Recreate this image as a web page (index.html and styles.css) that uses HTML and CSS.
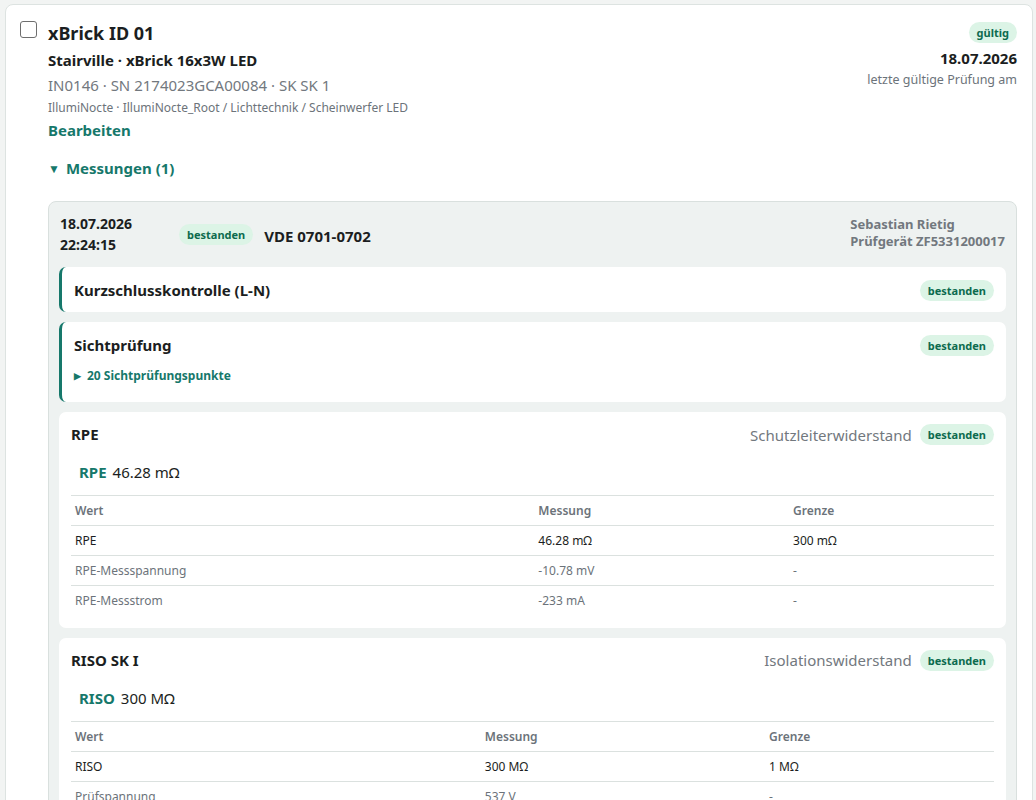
FILE: index.html
```html
<!DOCTYPE html>
<html lang="de">
<head>
<meta charset="utf-8">
<title>xBrick ID 01</title>
<link rel="stylesheet" href="styles.css">
</head>
<body>
<div class="card">
  <div class="head">
    <span class="checkbox"></span>
    <div class="info">
      <div class="title">xBrick ID 01</div>
      <div class="subtitle">Stairville · xBrick 16x3W LED</div>
      <div class="ids">IN0146 · SN 2174023GCA00084 · SK SK 1</div>
      <div class="path">IllumiNocte · IllumiNocte_Root / Lichttechnik / Scheinwerfer LED</div>
      <div class="edit">Bearbeiten</div>
    </div>
    <div class="status">
      <span class="badge">gültig</span>
      <div class="status-date">18.07.2026</div>
      <div class="status-note">letzte gültige Prüfung am</div>
    </div>
  </div>
  <div class="toggle"><span class="tri-down">▼</span>Messungen (1)</div>

  <div class="measure">
    <div class="m-head">
      <div class="m-date">18.07.2026<br>22:24:15</div>
      <span class="badge">bestanden</span>
      <div class="m-norm">VDE 0701-0702</div>
      <div class="m-who">Sebastian Rietig<br>Prüfgerät ZF5331200017</div>
    </div>

    <div class="sub sub-accent">
      <div class="sub-row">
        <div class="sub-title">Kurzschlusskontrolle (L-N)</div>
        <span class="badge">bestanden</span>
      </div>
    </div>

    <div class="sub sub-accent sub-visual">
      <div class="sub-row">
        <div class="sub-title">Sichtprüfung</div>
        <span class="badge">bestanden</span>
      </div>
      <div class="points"><span class="tri-right">▶</span>20 Sichtprüfungspunkte</div>
    </div>

    <div class="sub sub-plain">
      <div class="sub-row">
        <div class="sub-title">RPE</div>
        <div class="sub-right"><span class="kind">Schutzleiterwiderstand</span><span class="badge">bestanden</span></div>
      </div>
      <div class="value"><span class="value-key">RPE</span>46.28 mΩ</div>
      <table class="vals vals-rpe">
        <colgroup><col class="c1"><col class="c2"><col class="c3"></colgroup>
        <thead><tr><th>Wert</th><th>Messung</th><th>Grenze</th></tr></thead>
        <tbody>
          <tr class="main"><td>RPE</td><td>46.28 mΩ</td><td>300 mΩ</td></tr>
          <tr><td>RPE-Messspannung</td><td>-10.78 mV</td><td>-</td></tr>
          <tr><td>RPE-Messstrom</td><td>-233 mA</td><td>-</td></tr>
        </tbody>
      </table>
    </div>

    <div class="sub sub-plain">
      <div class="sub-row">
        <div class="sub-title">RISO SK I</div>
        <div class="sub-right"><span class="kind">Isolationswiderstand</span><span class="badge">bestanden</span></div>
      </div>
      <div class="value"><span class="value-key">RISO</span>300 MΩ</div>
      <table class="vals vals-riso">
        <colgroup><col class="c1"><col class="c2"><col class="c3"></colgroup>
        <thead><tr><th>Wert</th><th>Messung</th><th>Grenze</th></tr></thead>
        <tbody>
          <tr class="main"><td>RISO</td><td>300 MΩ</td><td>1 MΩ</td></tr>
          <tr><td>Prüfspannung</td><td>537 V</td><td>-</td></tr>
          <tr><td>Prüfstrom</td><td>0.54 mA</td><td>-</td></tr>
        </tbody>
      </table>
    </div>
  </div>
</div>
</body>
</html>
```
FILE: styles.css
```css
* { box-sizing: border-box; }

body {
  margin: 0;
  background: #f2f4f3;
  font-family: "Noto Sans", "Open Sans", sans-serif;
  color: #1d2125;
}

.card {
  margin: 4px 3px 0 5px;
  background: #ffffff;
  border: 1px solid #dde3e1;
  border-radius: 8px;
  padding: 16px 15px 20px 14px;
}

.head {
  display: flex;
  align-items: flex-start;
}

.checkbox {
  width: 17px;
  height: 17px;
  border: 1px solid #6e6e6e;
  border-radius: 3px;
  flex: none;
  background: #fff;
}

.info {
  margin-left: 11px;
  flex: 1;
}

.title {
  font-size: 18px;
  font-weight: 700;
  line-height: 26px;
  margin-top: -1px;
  color: #1b1e21;
}

.subtitle {
  font-size: 15px;
  font-weight: 700;
  line-height: 26px;
  margin-top: 1px;
  color: #1b1e21;
}

.ids {
  font-size: 15px;
  line-height: 26px;
  margin-top: -1px;
  color: #72787e;
}

.path {
  font-size: 12px;
  line-height: 18px;
  margin-top: 1px;
  color: #6c737a;
}

.edit {
  font-size: 15px;
  font-weight: 700;
  line-height: 28px;
  margin-top: -1px;
  color: #16786b;
}

.status {
  display: flex;
  flex-direction: column;
  align-items: flex-end;
  margin-top: 1px;
}

.badge {
  display: inline-block;
  background: #dcf4e6;
  color: #0c6b4e;
  font-size: 11px;
  font-weight: 700;
  line-height: 21px;
  padding: 0 8px;
  border-radius: 11px;
  white-space: nowrap;
}

.status-date {
  font-size: 15px;
  font-weight: 700;
  line-height: 22px;
  margin-top: 4px;
  color: #1b1e21;
}

.status-note {
  font-size: 12.5px;
  line-height: 22px;
  color: #6c737a;
}

.toggle {
  margin-top: 13px;
  margin-left: 28px;
  font-size: 15px;
  font-weight: 700;
  line-height: 22px;
  color: #16786b;
}

.tri-down {
  font-size: 12px;
  margin-right: 6px;
  position: relative;
  top: -1px;
}

.measure {
  margin: 20px 0 0 28px;
  background: #eef2f1;
  border: 1px solid #d9e0de;
  border-radius: 8px;
  padding: 10px;
  display: flex;
  flex-direction: column;
  gap: 10px;
}

.m-head {
  display: flex;
  align-items: center;
  padding: 1px 1px 2px;
}

.m-date {
  font-size: 14px;
  font-weight: 700;
  line-height: 21px;
  width: 111px;
  color: #1b1e21;
}

.m-head .badge {
  margin-left: 8px;
  margin-top: 1px;
}

.m-norm {
  margin-left: 11px;
  font-size: 15px;
  font-weight: 700;
  color: #1b1e21;
  margin-top: 3px;
}

.m-who {
  margin-left: auto;
  text-align: left;
  font-size: 13px;
  font-weight: 700;
  line-height: 17px;
  color: #72787e;
  align-self: flex-start;
  margin-top: 3px;
}

.sub {
  background: #ffffff;
  border-radius: 7px;
  padding: 12px;
}

.sub-accent {
  border-left: 3px solid #16786b;
  padding: 13px 12px 11px 12px;
}

.sub-visual {
  padding-bottom: 16px;
}

.sub-row {
  display: flex;
  align-items: center;
  justify-content: space-between;
}

.sub-title {
  font-size: 15px;
  font-weight: 700;
  line-height: 21px;
  color: #1b1e21;
}

.sub-right {
  display: flex;
  align-items: center;
  gap: 8px;
}

.kind {
  font-size: 15px;
  color: #72787e;
}

.points {
  margin-top: 11px;
  font-size: 12px;
  font-weight: 700;
  line-height: 18px;
  color: #16786b;
}

.tri-right {
  font-size: 9px;
  margin-right: 6px;
  position: relative;
  top: -1px;
}

.value {
  margin-top: 16px;
  padding: 0 8px;
  font-size: 15px;
  line-height: 22px;
  color: #1b1e21;
}

.value-key {
  font-weight: 700;
  color: #16786b;
  margin-right: 6px;
}

.vals {
  width: 100%;
  border-collapse: collapse;
  margin-top: 12px;
  font-size: 12px;
}

.vals th, .vals td {
  text-align: left;
  padding: 0 4px;
  height: 30px;
  border-top: 1px solid #dbe1df;
  color: #6c737a;
}

.vals th {
  font-weight: 600;
}

.vals tr.main td {
  color: #1b1e21;
}

.vals-rpe .c1 { width: 50.2%; }
.vals-rpe .c2 { width: 27.6%; }
.vals-rpe .c3 { width: 22.2%; }

.vals-riso .c1 { width: 44.4%; }
.vals-riso .c2 { width: 30.8%; }
.vals-riso .c3 { width: 24.8%; }
```
